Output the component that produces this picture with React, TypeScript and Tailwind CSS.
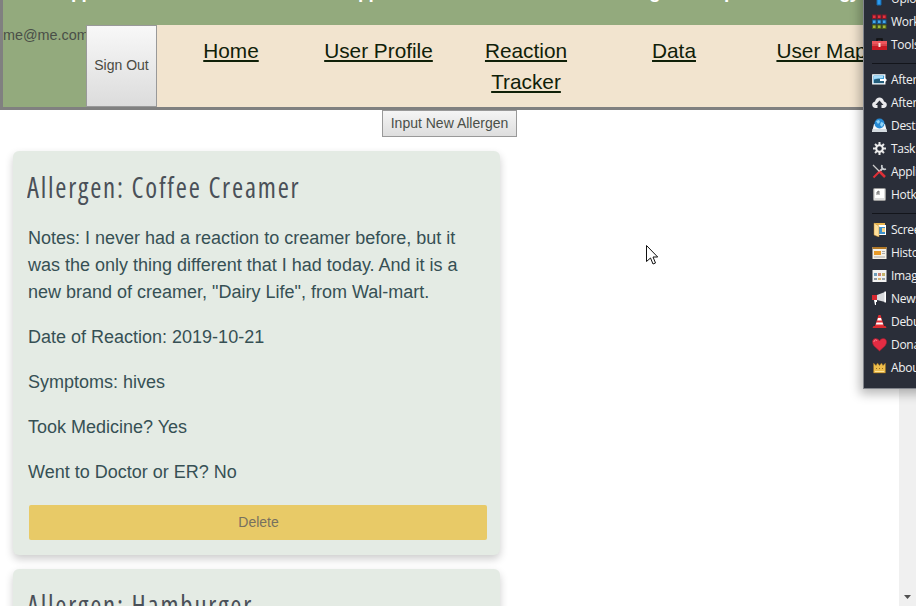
import type { ReactNode } from "react";

function NavLink({ children, className }: { children: ReactNode; className: string }) {
  return (
    <li className={`pt-[10px] text-center ${className}`}>
      <a href="#" className="text-[20.8px] leading-[31px] text-[#102008] underline decoration-2 underline-offset-[2px] [text-decoration-skip-ink:none]">
        {children}
      </a>
    </li>
  );
}

function MenuIcon({ name }: { name: string }) {
  let art: ReactNode = null;
  switch (name) {
    case "upload":
      art = <path d="M5 0v14h4V0z" fill="#2d9cf0" stroke="#1469ae" />;
      break;
    case "work":
      art = [0, 1, 2].map((r) =>
        [0, 1, 2].map((c) => (
          <rect key={`${r}${c}`} x={0.5 + c * 5} y={1 + r * 5} width="3.5" height="3.5" fill={["#e53340", "#44a9ec", "#a1b83b"][r]} stroke={["#861b29", "#185689", "#4c611c"][r]} />
        )),
      );
      break;
    case "tools":
      art = (
        <>
          <path d="M5 4V2h5v2" fill="none" stroke="#111" strokeWidth="1.5" />
          <path d="M0 4h15v9H0z" fill="#c71924" />
          <path d="M0 4h15v3H0z" fill="#ed555c" />
          <path d="M0 8h15" stroke="#f08a8c" strokeWidth=".8" />
          <path d="M6.5 6h2v4h-2z" fill="#ffe4df" />
        </>
      );
      break;
    case "capture":
      art = (
        <>
          <path d="M.8 2.8h12v9H.8z" fill="#3b9dd6" stroke="#fff" strokeWidth="1.3" />
          <path d="M2 8l4-2 6 3v2H2z" fill="#255f7c" />
          <path d="M2 4h9v2L2 7z" fill="#a8ddfa" />
          <path d="M8 7h4V5l3 3-3 3V9H8z" fill="#fff" />
        </>
      );
      break;
    case "cloud":
      art = <path d="M3 13C-1 12-.5 7 3 6.5c1-5.5 8-5.5 9 0 3.5.5 4 5.5 0 6.5H9.5V10h2l-4-4.5-4 4.5h2v3z" fill="#e9e9ec" />;
      break;
    case "dest":
      art = (
        <>
          <path d="M2 6h11l2 8H0z" fill="#f5f8fa" />
          <circle cx="7.5" cy="5.5" r="5" fill="#268ad4" />
          <path d="M4 3l3-1 1 2-2 2zm5 1l3 1-2 4-2-2z" fill="#91d4f8" />
          <path d="M.5 11h14v3H.5z" fill="#d5dce1" />
        </>
      );
      break;
    case "gear":
      art = (
        <>
          <path d="M7.5 1v13M1 7.5h13M3 3l9 9M12 3l-9 9" stroke="#e5e5e5" strokeWidth="2" />
          <circle cx="7.5" cy="7.5" r="3.3" fill="#292d38" stroke="#eee" strokeWidth="2" />
        </>
      );
      break;
    case "app":
      art = (
        <>
          <path d="M1.5 13.5L9 6" stroke="#df3037" strokeWidth="2" />
          <path d="M8 7l3-3M10 1c-1 3 1 5 4 4" stroke="#c9cdd1" strokeWidth="1.8" fill="none" />
          <path d="M1 1l7 7" stroke="#ccc" strokeWidth="1.3" />
          <path d="M7.5 7.5l5.5 5.5" stroke="#df3037" strokeWidth="2.5" />
        </>
      );
      break;
    case "hotkey":
      art = (
        <>
          <rect x="1.5" y="1.5" width="12" height="12" rx="1" fill="#ddd" stroke="#999" />
          <path d="M3 2h9v9H3z" fill="#fff" />
          <path d="M5 8V5l2-1v4M5 6h2" stroke="#555" fill="none" strokeWidth=".8" />
        </>
      );
      break;
    case "folder":
      art = (
        <>
          <path d="M2 1h11v12H2z" fill="#e8b44e" />
          <path d="M6 3h8v10H6z" fill="#fff" />
          <path d="M7 5h6v7H7z" fill="#3e91cc" />
          <path d="M10 6h3v4h-3z" fill="#f6d58b" />
          <path d="M2 1l5 3v11l-5-2z" fill="#ffe09b" stroke="#bd862b" strokeWidth=".5" />
        </>
      );
      break;
    case "history":
      art = (
        <>
          <path d="M.5 2h14v12H.5z" fill="#f5f1e7" />
          <path d="M.5 2h14v2H.5z" fill="#b27826" />
          <path d="M2 6h7v4H2z" fill="#e89a27" />
          <path d="M10 6.5h3M10 8.5h3M2 12h11" stroke="#aaa" />
        </>
      );
      break;
    case "image":
      art = (
        <>
          <path d="M.5 2h14v12H.5z" fill="#f2f2f2" />
          {[0, 1, 2].map((c) => (
            <g key={c}>
              <path d={`M${2 + c * 4} 5h3v3H${2 + c * 4}z`} fill={["#6e9dba", "#c98172", "#c6b369"][c]} />
              <path d={`M${2 + c * 4} 10h3v2H${2 + c * 4}z`} fill={["#8c98a3", "#d6b26b", "#9aa3a8"][c]} />
            </g>
          ))}
        </>
      );
      break;
    case "news":
      art = (
        <>
          <path d="M0 4h6v5H0z" fill="#d52730" />
          <path d="M5 4l8-3v10L5 9z" fill="#d7d9dc" />
          <path d="M12.5.5H14v11h-1.5zM2 9h3v2H4v3H3z" fill="#fff" />
        </>
      );
      break;
    case "cone":
      art = (
        <>
          <path d="M6.5 1h2L12 12H3z" fill="#e52f35" />
          <path d="M6 4h3l.8 2.5H5.2zM4.5 8.5h6l.7 2H3.8z" fill="#fff" />
          <path d="M1.5 12h12l1 2H.5z" fill="#d72c31" />
        </>
      );
      break;
    case "heart":
      art = (
        <>
          <path d="M7.5 14L2 9C-3 2 5-1 7.5 4 10-1 18 2 13 9z" fill="#e42c43" stroke="#9b1e31" strokeWidth=".6" />
          <path d="M2 5c0-2 2-3 3-1" stroke="#f88c98" fill="none" />
        </>
      );
      break;
    default:
      art = (
        <>
          <path d="M1.5 3l2.5 2.5L5.500 3l2 2.500 2-2.500L11 5.500 13.500 3v10h-12z" fill="#edbd4b" stroke="#956b21" strokeWidth=".5" />
          <path d="M3 11.500h9" stroke="#ffe59b" />
          <path d="M4 8.500h1M7 8.500h1M10 8.500h1" stroke="#956b21" />
        </>
      );
  }
  return (
    <svg className="h-[15px] w-[15px] shrink-0" viewBox="0 0 15 15">
      {art}
    </svg>
  );
}

function MenuRow({ icon, label }: { icon: string; label: string }) {
  return (
    <div className="flex h-[23px] items-center gap-[3px] pl-[8px] font-['Open_Sans','Noto_Sans',sans-serif] text-[12px] tracking-[-0.3px] whitespace-nowrap text-[#f1f1f1]">
      <MenuIcon name={icon} />
      <span className="pl-px">{label}</span>
    </div>
  );
}

function ContextMenu() {
  return (
    <aside className="absolute top-[-14px] left-[863px] h-[403px] w-[160px] border border-[#82858c] bg-[#2a2e39] shadow-[0_2px_10px_3px_rgba(0,0,0,0.28)]">
      <MenuRow icon="upload" label="Upload" />
      <MenuRow icon="work" label="Workflows" />
      <MenuRow icon="tools" label="Tools" />
      <div className="mt-[7px] mb-[4px] ml-[8px] h-px bg-[#13151b]" />
      <MenuRow icon="capture" label="After capture tasks" />
      <MenuRow icon="cloud" label="After upload tasks" />
      <MenuRow icon="dest" label="Destinations" />
      <MenuRow icon="gear" label="Task settings..." />
      <MenuRow icon="app" label="Application settings..." />
      <MenuRow icon="hotkey" label="Hotkey settings..." />
      <div className="mt-[7px] mb-[4px] ml-[8px] h-px bg-[#13151b]" />
      <MenuRow icon="folder" label="Screenshots folder..." />
      <MenuRow icon="history" label="History..." />
      <MenuRow icon="image" label="Image history..." />
      <MenuRow icon="news" label="News" />
      <MenuRow icon="cone" label="Debug" />
      <MenuRow icon="heart" label="Donate..." />
      <MenuRow icon="crown" label="About..." />
    </aside>
  );
}

function CardTitle({ children }: { children: ReactNode }) {
  return (
    <h2 className="ml-[-1px] h-[42px] font-['Open_Sans',sans-serif] text-[28.8px] leading-[42px] font-[480] tracking-[1.9px] whitespace-nowrap text-[#4a5058] [font-stretch:75%]">
      <span className="inline-block origin-left scale-x-[0.935]">{children}</span>
    </h2>
  );
}

const card = "w-[487px] rounded-[6px] bg-[#e4ebe4] px-[15px] pt-[15px] shadow-[0_4px_8px_rgba(0,0,0,0.2)]";

export default function App() {
  return (
    <div className="relative h-[606px] w-[916px] overflow-hidden bg-white font-['Liberation_Sans',Arial,sans-serif] text-[#4a4f48]">
      <header className="h-[110px] border-b-[3px] border-l-[3px] border-[#808080] bg-[#93aa7d]">
        <div className="relative h-[25px] overflow-hidden text-[19px] leading-[24px] font-bold text-white">
          <span className="absolute top-[-20px] left-[68px] tracking-[-1px]">pp</span>
          <span className="absolute top-[-20px] left-[355px] tracking-[-1px]">pp</span>
          <span className="absolute top-[-20px] left-[646px]">g</span>
          <span className="absolute top-[-20px] left-[721px]">p</span>
          <span className="absolute top-[-20px] left-[836px] tracking-[-1px]">gy</span>
        </div>
        <div className="flex h-[82px]">
          <span className="w-[83px] pt-[2px] text-[14.4px] leading-[17px] whitespace-nowrap">me@me.com</span>
          <button className="h-[82px] w-[71px] shrink-0 border border-[#999] bg-linear-to-b from-[#f8f8f8] to-[#dcdcdc] pb-px text-[14px] text-[#4a4a42]">
            Sign Out
          </button>
          <ul className="flex grow bg-[#f2e4cf]">
            <NavLink className="w-[148px]">Home</NavLink>
            <NavLink className="w-[147px]">User Profile</NavLink>
            <NavLink className="w-[148px] px-[20px]">Reaction Tracker</NavLink>
            <NavLink className="w-[148px]">Data</NavLink>
            <NavLink className="w-[147px]">User Map</NavLink>
          </ul>
        </div>
      </header>
      <main className="flex h-[496px]">
        <div className="w-[899px] overflow-hidden">
          <div className="flex h-[41px] justify-center">
            <button className="h-[27px] w-[135px] border border-[#999] bg-linear-to-b from-[#f5f5f5] to-[#dedede] text-[14px] whitespace-nowrap">
              Input New Allergen
            </button>
          </div>
          <section className="ml-[13px] flex flex-col gap-[14px]">
            <article className={`${card} h-[404px]`}>
              <CardTitle>Allergen: Coffee Creamer</CardTitle>
              <div className="mt-[17px] flex flex-col gap-[18px] text-[18px] leading-[27px] whitespace-nowrap text-[#365054]">
                <p>
                  Notes: I never had a reaction to creamer before, but it
                  <br />
                  was the only thing different that I had today. And it is a
                  <br />
                  new brand of creamer, "Dairy Life", from Wal-mart.
                </p>
                <p>Date of Reaction: 2019-10-21</p>
                <p>Symptoms: hives</p>
                <p>Took Medicine? Yes</p>
                <p>Went to Doctor or ER? No</p>
              </div>
              <button className="mt-[19px] ml-px h-[35px] w-[458px] rounded-[2px] bg-[#e8ca67] pl-px text-[14px] text-[#77715f]">Delete</button>
            </article>
            <article className={`${card} h-[404px]`}>
              <CardTitle>Allergen: Hamburger</CardTitle>
            </article>
          </section>
        </div>
        <div className="flex w-[17px] items-end justify-center bg-[#f0f0f0] pb-[7px]">
          <svg className="h-[4px] w-[7px]" viewBox="0 0 7 4">
            <path d="M0 0h7L3.5 4z" fill="#505050" />
          </svg>
        </div>
      </main>
      <svg className="absolute top-[245px] left-[646px] h-[20px] w-[12px]" viewBox="0 0 12 20">
        <path d="M.5.5v16l4-3.5 2.5 6 2.5-1-2.5-6h4.7z" fill="#fff" stroke="#111" />
      </svg>
      <ContextMenu />
    </div>
  );
}
